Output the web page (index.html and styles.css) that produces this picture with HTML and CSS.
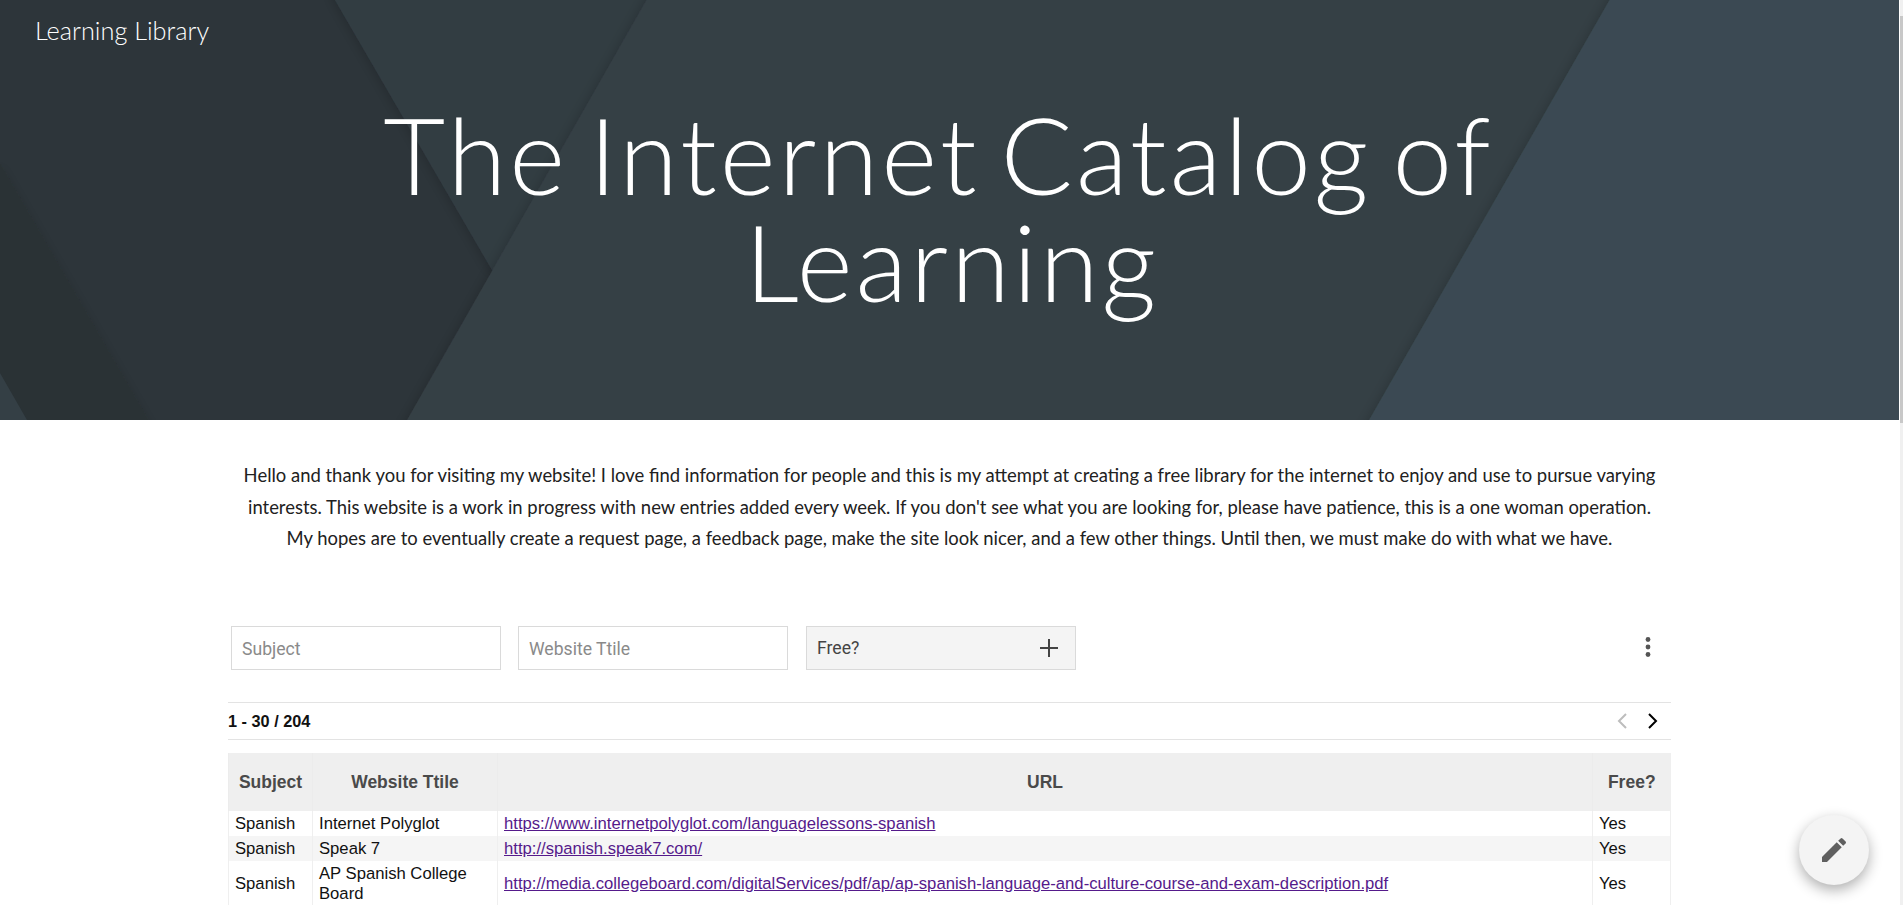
FILE: index.html
```html
<!DOCTYPE html>
<html lang="en">
<head>
    <meta charset="UTF-8">
    <meta name="viewport" content="width=device-width, initial-scale=1.0">
    <title>Learning Library</title>
    <link rel="stylesheet" href="styles.css">
</head>
<body>
    <div class="page">
        <header class="hero">
            <svg class="hero-bg" viewBox="0 0 1899 420" preserveAspectRatio="none" aria-hidden="true">
                <defs>
                    <filter id="edge" x="-10%" y="-10%" width="120%" height="120%">
                        <feDropShadow dx="-2" dy="1" stdDeviation="6" flood-color="#000" flood-opacity="0.18"/>
                    </filter>
                </defs>
                <rect width="1899" height="420" fill="#2d353a"/>
                <polygon points="0,163 166,450 0,450" fill="#2b3335" filter="url(#edge)"/>
                <polygon points="0,373 27,420 40,450 -20,450 -20,373" fill="#343f45"/>
                <polygon points="335,0 330,-20 1700,-20 1700,450 492,270" fill="#333d43" filter="url(#edge)"/>
                <polygon points="658,-20 1960,-20 1960,450 390,450" fill="#353f45" filter="url(#edge)"/>
                <polygon points="1621,-20 1960,-20 1960,450 1352,450" fill="#3a4a52" filter="url(#edge)"/>
            </svg>
            <a class="site-name" href="#">Learning Library</a>
            <h1 class="hero-title">
                <span class="title-line title-line-first">The Internet Catalog of</span>
                <span class="title-line title-line-second">Learning</span>
            </h1>
        </header>

        <main class="content">
            <p class="intro">Hello and thank you for visiting my website! I love find information for people and this is my attempt at creating a free library for the internet to enjoy and use to pursue varying interests. This website is a work in progress with new entries added every week. If you don't see what you are looking for, please have patience, this is a one woman operation. My hopes are to eventually create a request page, a feedback page, make the site look nicer, and a few other things. Until then, we must make do with what we have.</p>

            <div class="filters">
                <input class="filter" type="text" placeholder="Subject">
                <input class="filter" type="text" placeholder="Website Ttile">
                <div class="filter filter-select">
                    <span>Free?</span>
                    <svg class="plus-icon" viewBox="0 0 18 18" aria-hidden="true"><path d="M9 0v18M0 9h18"/></svg>
                </div>
                <svg class="more-icon" viewBox="0 0 6 20" aria-hidden="true">
                    <circle cx="3" cy="2.5" r="2.4"/>
                    <circle cx="3" cy="10" r="2.4"/>
                    <circle cx="3" cy="17.5" r="2.4"/>
                </svg>
            </div>

            <div class="pager">
                <span class="pager-count">1 - 30 / 204</span>
                <div class="pager-arrows">
                    <svg class="arrow arrow-off" viewBox="0 0 10 16" aria-hidden="true"><path d="M9 1 2 8l7 7"/></svg>
                    <svg class="arrow" viewBox="0 0 10 16" aria-hidden="true"><path d="M1 1l7 7-7 7"/></svg>
                </div>
            </div>

            <table class="catalog">
                <colgroup>
                    <col class="col-subject">
                    <col class="col-title">
                    <col>
                    <col class="col-free">
                </colgroup>
                <thead>
                    <tr>
                        <th>Subject</th>
                        <th>Website Ttile</th>
                        <th>URL</th>
                        <th>Free?</th>
                    </tr>
                </thead>
                <tbody>
                    <tr>
                        <td>Spanish</td>
                        <td>Internet Polyglot</td>
                        <td><a href="#">https://www.internetpolyglot.com/languagelessons-spanish</a></td>
                        <td>Yes</td>
                    </tr>
                    <tr>
                        <td>Spanish</td>
                        <td>Speak 7</td>
                        <td><a href="#">http://spanish.speak7.com/</a></td>
                        <td>Yes</td>
                    </tr>
                    <tr>
                        <td>Spanish</td>
                        <td>AP Spanish College Board</td>
                        <td><a href="#">http://media.collegeboard.com/digitalServices/pdf/ap/ap-spanish-language-and-culture-course-and-exam-description.pdf</a></td>
                        <td>Yes</td>
                    </tr>
                </tbody>
            </table>
        </main>
    </div>

    <div class="scrollbar"><div class="scrollbar-thumb"></div></div>

    <button class="edit-button" aria-label="Edit">
        <svg viewBox="0 0 24 24" aria-hidden="true">
            <path d="M3 17.25V21h3.75L17.81 9.94l-3.75-3.75L3 17.25zM20.71 7.04c.39-.39.39-1.02 0-1.41l-2.34-2.34a1 1 0 0 0-1.41 0l-1.83 1.83 3.75 3.75 1.83-1.83z"/>
        </svg>
    </button>
</body>
</html>
```

FILE: styles.css
```css
html, body {
    height: 100%;
}

body {
    margin: 0;
    display: flex;
    height: 100vh;
    overflow: hidden;
    background-color: #fff;
    color: #212121;
    font-family: "Lato", "Liberation Sans", sans-serif;
}

.page {
    flex: 1;
    min-width: 0;
}

.scrollbar {
    width: 3px;
    margin-left: 1px;
    background-color: #f0f0f0;
}

.scrollbar-thumb {
    height: 407px;
    margin-top: 16px;
    background-color: #c8c8c8;
}

/* banner */
.hero {
    position: relative;
    height: 420px;
    color: #fff;
    overflow: hidden;
}

.hero-bg {
    position: absolute;
    top: 0;
    left: 0;
    width: 100%;
    height: 100%;
}

.site-name {
    position: relative;
    display: block;
    padding: 16px 0 0 35px;
    font-size: 25.3px;
    line-height: 29px;
    font-weight: 300;
    color: #fff;
    text-decoration: none;
}

.hero-title {
    position: relative;
    margin: 55px auto 0;
    width: 1320px;
    font-size: 107px;
    line-height: 107px;
    font-weight: 300;
    letter-spacing: 3px;
    word-spacing: -11px;
    text-align: center;
}

.title-line {
    display: block;
}

.title-line-first {
    padding-right: 22px;
}

.title-line-second {
    padding-left: 5px;
}

/* content */
.content {
    width: 1443px;
    margin-left: 228px;
}

.intro {
    margin: 40px 0 0;
    padding: 0 8px;
    font-size: 18.45px;
    line-height: 31.5px;
    text-align: center;
}

.filters {
    display: flex;
    align-items: center;
    gap: 17px;
    margin-top: 71.5px;
    padding-left: 3px;
}

.filter {
    box-sizing: border-box;
    width: 270px;
    height: 44px;
    padding: 1px 10px 0;
    border: 1px solid #dadada;
    border-radius: 0;
    outline: none;
    font-family: "Roboto", "Liberation Sans", sans-serif;
    font-size: 17.6px;
    color: #444;
}

.filter::placeholder {
    color: #8a8a8a;
    opacity: 1;
}

.filter-select {
    display: flex;
    align-items: center;
    justify-content: space-between;
    margin-left: 1px;
    padding: 0 17px 0 10px;
    background-color: #f4f4f4;
}

.plus-icon {
    width: 18px;
    height: 18px;
    fill: none;
    stroke: #444;
    stroke-width: 2;
}

.more-icon {
    width: 6px;
    height: 20px;
    margin-left: auto;
    margin-right: 20px;
    margin-bottom: 2px;
    fill: #555;
}

.pager {
    display: flex;
    align-items: center;
    justify-content: space-between;
    box-sizing: border-box;
    height: 38px;
    margin-top: 32px;
    border-top: 1px solid #e3e3e3;
    border-bottom: 1px solid #e3e3e3;
    font-family: "Liberation Sans", Arial, sans-serif;
}

.pager-count {
    font-size: 16.3px;
    font-weight: bold;
    color: #111;
}

.pager-arrows {
    display: flex;
    gap: 21px;
    margin-right: 13px;
}

.arrow {
    width: 10px;
    height: 16px;
    fill: none;
    stroke: #000;
    stroke-width: 2;
}

.arrow-off {
    stroke: #bdbdbd;
}

/* table */
.catalog {
    width: 100%;
    margin-top: 13px;
    border-collapse: collapse;
    table-layout: fixed;
    font-family: "Liberation Sans", Arial, sans-serif;
    font-size: 16.67px;
    line-height: 20px;
    color: #111;
}

.col-subject {
    width: 84px;
}

.col-title {
    width: 185px;
}

.col-free {
    width: 78px;
}

.catalog th {
    height: 58px;
    padding: 0;
    background-color: #efefef;
    border-left: 1px solid #ececec;
    font-size: 17.5px;
    color: #4a4a4a;
    text-align: center;
}

.catalog td {
    height: 25px;
    padding: 0 6px;
    box-sizing: border-box;
    border-left: 1px solid #efefef;
    border-right: 1px solid #efefef;
}

.catalog td:last-child {
    padding-left: 6px;
}

.catalog tbody tr:nth-child(2) {
    background-color: #f5f5f5;
}

.catalog tbody tr:nth-child(3) td {
    height: 45px;
}

.catalog a {
    color: #551a8b;
}

.edit-button {
    position: fixed;
    right: 34px;
    bottom: 20px;
    display: flex;
    align-items: center;
    justify-content: center;
    width: 70px;
    height: 70px;
    padding: 0;
    border: none;
    border-radius: 50%;
    background-color: #f4f4f4;
    box-shadow: 0 5px 14px rgba(0, 0, 0, 0.32);
}

.edit-button svg {
    width: 32px;
    height: 32px;
    fill: #5f5f5f;
}
```
